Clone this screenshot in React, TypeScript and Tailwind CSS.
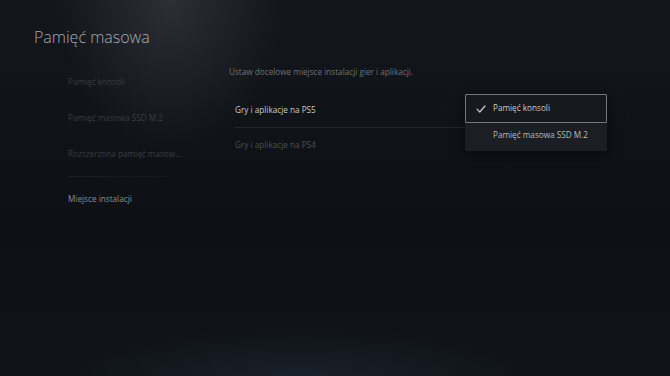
import { type JSX } from "react";

const sideItems = [
  { title: "Pamięć konsoli", dim: true },
  { title: "Pamięć masowa SSD M.2", dim: true },
  { title: "Rozszerzona pamięć masow...", dim: true },
];

function Check(): JSX.Element {
  return (
    <svg width="10" height="10" viewBox="0 0 10 10" fill="none">
      <path d="M1 5.2 L3.8 8 L9 2" stroke="#c9cacc" strokeWidth="1.2" strokeLinecap="round" strokeLinejoin="round" />
    </svg>
  );
}

export default function App(): JSX.Element {
  return (
    <div
      className="relative w-[670px] h-[376px] overflow-hidden bg-[#0e1116] font-['Open_Sans',sans-serif] bg-[radial-gradient(ellipse_150px_200px_at_170px_0px,rgba(120,128,140,0.24),transparent_75%),radial-gradient(ellipse_280px_60px_at_300px_376px,rgba(40,56,70,0.35),transparent_80%),linear-gradient(180deg,#13161b_0%,#0d1015_60%,#10141a_100%)]"
    >
      {/* Header */}
      <h1 className="pl-[34px] pt-[25px] text-[16px] font-light leading-[24px] text-[#a8abb0]">
        Pamięć masowa
      </h1>

      <div className="flex mt-[15px]">
        {/* Sidebar */}
        <aside className="w-[161px] ml-[68px] flex flex-col">
          <ul className="flex flex-col">
            {sideItems.map((item) => (
              <li key={item.title} className="h-[36px] flex items-center text-[8.2px] text-[#3a3d42]">
                {item.title}
              </li>
            ))}
          </ul>
          <div className="h-px w-[127px] bg-gradient-to-r from-[#1d2025] to-transparent mt-[4px]" />
          <div className="h-[45px] flex items-center text-[8.2px] text-[#8c8f93]">Miejsce instalacji</div>
        </aside>

        {/* Content */}
        <main className="flex-1 flex flex-col -mt-[2px]">
          <p className="text-[8.2px] text-[#6f7276] h-[20px] flex items-center">
            Ustaw docelowe miejsce instalacji gier i aplikacji.
          </p>
          <div className="mt-[11px] ml-[6px] mr-[70px]">
            <div className="h-[35px] flex items-center text-[8.2px] text-[#c9cacc] border-b border-[#23262b]">
              Gry i aplikacje na PS5
            </div>
            <div className="h-[34px] flex items-center text-[8.2px] text-[#4d5055]">
              Gry i aplikacje na PS4
            </div>
          </div>
        </main>
      </div>

      {/* Dropdown */}
      <div className="absolute left-[465px] top-[94px] w-[142px] bg-[#1b1e23] shadow-[0_4px_12px_rgba(0,0,0,0.5)] pb-[3px]">
        <div className="h-[29px] flex items-center border border-[#77777a] rounded-[1px] bg-[#16191e]">
          <span className="w-[27px] flex justify-center pl-[3px]">
            <Check />
          </span>
          <span className="text-[8.2px] text-[#c9cacc]">Pamięć konsoli</span>
        </div>
        <div className="h-[25px] flex items-center pl-[28px] text-[8.2px] text-[#b9babc]">
          Pamięć masowa SSD M.2
        </div>
      </div>
    </div>
  );
}
